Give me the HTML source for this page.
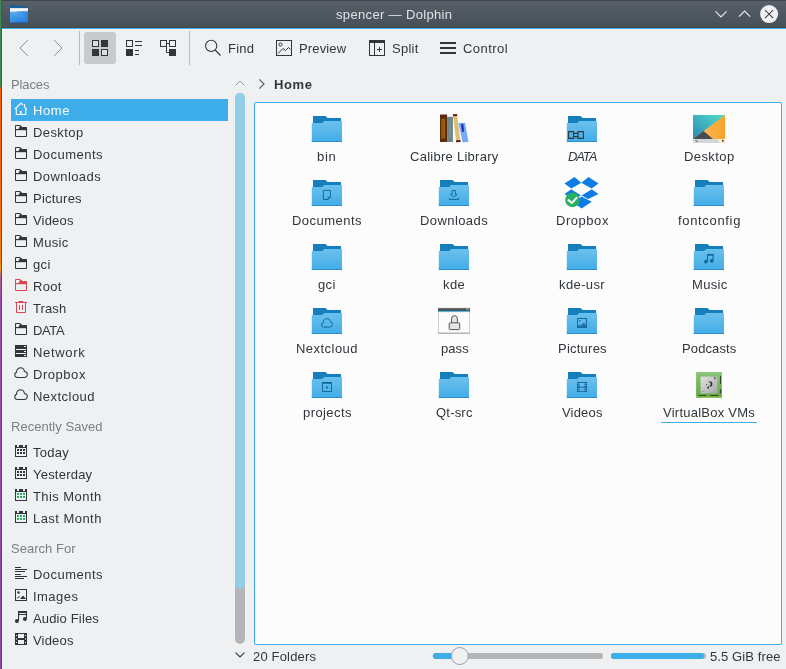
<!DOCTYPE html>
<html><head><meta charset="utf-8"><style>
html,body{margin:0;padding:0;}
body{width:786px;height:669px;overflow:hidden;position:relative;background:#eff0f1;font-family:"Liberation Sans", sans-serif;color:#31363b;}
.t{position:absolute;white-space:nowrap;will-change:transform;font-size:13px;line-height:18px;color:#31363b;}
.hd{color:#85888b;}
.ic{position:absolute;overflow:visible;}
</style></head><body>
<svg width="0" height="0" style="position:absolute"><defs>
<linearGradient id="fg" x1="0" y1="0" x2="0" y2="1"><stop offset="0" stop-color="#6cc0ee"/><stop offset="1" stop-color="#40ade8"/></linearGradient>
<linearGradient id="tg" x1="0" y1="0" x2="1" y2="1"><stop offset="0" stop-color="#56aef0"/><stop offset="1" stop-color="#1673d8"/></linearGradient>
</defs></svg>
<div style="position:absolute;left:0;top:0;width:786px;height:28px;background:linear-gradient(#40464c 0,#40464c 1px,#57606a 1px,#475057 27px,#434a50 27px)"></div><div style="position:absolute;left:0;top:28px;width:786px;height:1px;background:#3daee9"></div><div style="position:absolute;left:2px;top:29px;width:784px;height:1px;background:#f6f3f0"></div><svg class="ic" style="left:10px;top:5px" width="18" height="18" viewBox="0 0 18 18">
<path d="M0 0.1H7.9L8.9 1.3H18V17.7H0Z" fill="#1c5e9a"/>
<rect x="0" y="3.1" width="18" height="3.1" fill="#f2f4f6"/>
<path d="M0 6.2H18V7H0Z" fill="#e4eaf0"/>
<path d="M0 7.1H6.6L7.3 6.2H18V17.7H0Z" fill="url(#tg)"/>
<path d="M0 7.1H6.6L7.3 6.2H10L18 14V17.7H14Z" fill="#ffffff" opacity="0.06"/>
<rect x="0" y="17.2" width="18" height="0.5" fill="#155aa0"/>
</svg><div class="t" style="left:336.19px;top:6px;letter-spacing:0.345px;color:#dfe1e3;">spencer — Dolphin</div><svg class="ic" style="left:712px;top:4px" width="70" height="22" viewBox="712 4 70 22">
<path d="M715.5 11.3L721 16.8L726.5 11.3" stroke="#e8e9ea" stroke-width="1.2" fill="none"/>
<path d="M739 16.6L744.6 11L750.2 16.6" stroke="#e8e9ea" stroke-width="1.2" fill="none"/>
<circle cx="769.1" cy="14.1" r="9" fill="#eff0f1"/>
<path d="M765 10L773.2 18.2M773.2 10L765 18.2" stroke="#31363b" stroke-width="1.05"/>
</svg><div style="position:absolute;left:0;top:0;width:1px;height:669px;background:linear-gradient(#3f8c50 0,#3f8c50 87px,#ff5a00 88px,#ff6a00 200px,#ff7e00 262px,#ffa000 268px,#b8608a 276px,#9a4cb2 300px,#8e44ad 669px)"></div><div style="position:absolute;left:1px;top:0;width:1px;height:669px;background:#4c5257"></div><div style="position:absolute;left:2px;top:30px;width:1px;height:639px;background:#f5f6f7"></div><svg class="ic" style="left:0;top:30px" width="520" height="40" viewBox="0 30 520 40">
<path d="M27.8 40.2L20 48L27.8 55.8" stroke="#8c8e90" stroke-width="1" fill="none"/>
<path d="M54.2 40.2L62 48L54.2 55.8" stroke="#8c8e90" stroke-width="1" fill="none"/>
<rect x="79" y="31" width="1" height="34" fill="#b9babb"/>
<rect x="84" y="32" width="32" height="32" rx="3" fill="#c9cacc"/>
<rect x="92.5" y="40.5" width="6" height="6" fill="#dcdddf" stroke="#31363b"/>
<rect x="101" y="40" width="7" height="7" fill="#31363b"/>
<rect x="92" y="49" width="7" height="7" fill="#31363b"/>
<rect x="101.5" y="49.5" width="6" height="6" fill="#dcdddf" stroke="#31363b"/>
<rect x="126.5" y="40.5" width="6" height="6" fill="none" stroke="#31363b"/>
<rect x="126" y="49" width="7" height="7" fill="#31363b"/>
<rect x="135" y="41" width="7" height="1" fill="#31363b"/>
<rect x="135" y="45" width="7" height="1" fill="#31363b"/>
<rect x="135" y="50" width="4" height="1" fill="#31363b"/>
<rect x="135" y="54" width="4" height="1" fill="#31363b"/>
<rect x="160.5" y="40.5" width="6" height="6" fill="none" stroke="#31363b"/>
<rect x="169.5" y="40.5" width="6" height="6" fill="none" stroke="#31363b"/>
<rect x="169" y="49" width="7" height="7" fill="#31363b"/>
<path d="M167 43.5H169M166.5 47V52.5H169" stroke="#31363b" fill="none"/>
<rect x="189" y="31" width="1" height="34" fill="#b9babb"/>
<circle cx="211.2" cy="45.9" r="5.6" stroke="#31363b" stroke-width="1.1" fill="none"/>
<path d="M215.2 50L220.5 55.5" stroke="#31363b" stroke-width="1.1"/>
<rect x="276.5" y="40.5" width="15" height="15" fill="none" stroke="#31363b"/>
<circle cx="280.5" cy="44.5" r="1.6" stroke="#31363b" fill="none"/>
<path d="M278 53.5L283 48.5L285.5 50.5L288.5 47.5L290.5 49.5" stroke="#31363b" fill="none"/>
<rect x="369.5" y="40.5" width="15" height="15" fill="none" stroke="#31363b"/>
<rect x="369" y="40" width="16" height="3" fill="#31363b"/>
<rect x="374" y="43" width="1" height="13" fill="#31363b"/>
<path d="M379.5 47V52M377 49.5H382" stroke="#31363b"/>
<rect x="440" y="42" width="16" height="2" fill="#31363b"/>
<rect x="440" y="47" width="16" height="2" fill="#31363b"/>
<rect x="440" y="52" width="16" height="2" fill="#31363b"/>
</svg><div class="t" style="left:228.00px;top:40px;letter-spacing:0.211px;">Find</div><div class="t" style="left:298.50px;top:40px;letter-spacing:0.150px;">Preview</div><div class="t" style="left:391.50px;top:40px;letter-spacing:0.250px;">Split</div><div class="t" style="left:462.60px;top:40px;letter-spacing:0.460px;">Control</div><div class="t" style="left:10.50px;top:76px;letter-spacing:-0.120px;color:#7c7f82;">Places</div><div class="t" style="left:10.60px;top:418px;letter-spacing:0.028px;color:#7c7f82;">Recently Saved</div><div class="t" style="left:10.60px;top:540px;letter-spacing:0.020px;color:#7c7f82;">Search For</div><div style="position:absolute;left:11px;top:99px;width:217px;height:22px;background:#3daee9"></div><div class="t" style="left:33.20px;top:102px;letter-spacing:0.578px;color:#fcfcfc;">Home</div><svg class="ic" style="left:13px;top:101px" width="16" height="16" viewBox="0 0 16 16">
<path d="M2 8L8 2L10 4" stroke="#fcfcfc" fill="none" stroke-width="1.1"/>
<path d="M11.5 3V6" stroke="#fcfcfc" stroke-width="1.1"/>
<path d="M11.5 6L14 8.5" stroke="#fcfcfc" stroke-width="1.1"/>
<path d="M3.3 7.5V13.5H12.8V7.5" stroke="#fcfcfc" fill="none" stroke-width="1.1"/>
<rect x="7" y="10" width="1.6" height="3.6" fill="#fcfcfc"/>
</svg><div class="t" style="left:33.20px;top:124px;letter-spacing:0.406px;color:#31363b;">Desktop</div><svg class="ic" style="left:14px;top:124px" width="14" height="14" viewBox="-1 -1 14 14">
<path d="M0.5 0.5H5.2L7.2 2.5H11.5V11.5H0.5Z" fill="none" stroke="#31363b"/>
<path d="M5.2 0.5L7.2 2.5H12V4.5H3.4Z" fill="#31363b"/>
<rect x="0" y="4" width="12" height="1.2" fill="#31363b"/>
</svg><div class="t" style="left:33.20px;top:146px;letter-spacing:0.481px;color:#31363b;">Documents</div><svg class="ic" style="left:14px;top:146px" width="14" height="14" viewBox="-1 -1 14 14">
<path d="M0.5 0.5H5.2L7.2 2.5H11.5V11.5H0.5Z" fill="none" stroke="#31363b"/>
<path d="M5.2 0.5L7.2 2.5H12V4.5H3.4Z" fill="#31363b"/>
<rect x="0" y="4" width="12" height="1.2" fill="#31363b"/>
</svg><div class="t" style="left:33.20px;top:168px;letter-spacing:0.418px;color:#31363b;">Downloads</div><svg class="ic" style="left:14px;top:168px" width="14" height="14" viewBox="-1 -1 14 14">
<path d="M0.5 0.5H5.2L7.2 2.5H11.5V11.5H0.5Z" fill="none" stroke="#31363b"/>
<path d="M5.2 0.5L7.2 2.5H12V4.5H3.4Z" fill="#31363b"/>
<rect x="0" y="4" width="12" height="1.2" fill="#31363b"/>
</svg><div class="t" style="left:33.20px;top:190px;letter-spacing:0.236px;color:#31363b;">Pictures</div><svg class="ic" style="left:14px;top:190px" width="14" height="14" viewBox="-1 -1 14 14">
<path d="M0.5 0.5H5.2L7.2 2.5H11.5V11.5H0.5Z" fill="none" stroke="#31363b"/>
<path d="M5.2 0.5L7.2 2.5H12V4.5H3.4Z" fill="#31363b"/>
<rect x="0" y="4" width="12" height="1.2" fill="#31363b"/>
</svg><div class="t" style="left:33.20px;top:212px;letter-spacing:0.177px;color:#31363b;">Videos</div><svg class="ic" style="left:14px;top:212px" width="14" height="14" viewBox="-1 -1 14 14">
<path d="M0.5 0.5H5.2L7.2 2.5H11.5V11.5H0.5Z" fill="none" stroke="#31363b"/>
<path d="M5.2 0.5L7.2 2.5H12V4.5H3.4Z" fill="#31363b"/>
<rect x="0" y="4" width="12" height="1.2" fill="#31363b"/>
</svg><div class="t" style="left:33.20px;top:234px;letter-spacing:0.341px;color:#31363b;">Music</div><svg class="ic" style="left:14px;top:234px" width="14" height="14" viewBox="-1 -1 14 14">
<path d="M0.5 0.5H5.2L7.2 2.5H11.5V11.5H0.5Z" fill="none" stroke="#31363b"/>
<path d="M5.2 0.5L7.2 2.5H12V4.5H3.4Z" fill="#31363b"/>
<rect x="0" y="4" width="12" height="1.2" fill="#31363b"/>
</svg><div class="t" style="left:33.20px;top:256px;letter-spacing:0.323px;color:#31363b;">gci</div><svg class="ic" style="left:14px;top:256px" width="14" height="14" viewBox="-1 -1 14 14">
<path d="M0.5 0.5H5.2L7.2 2.5H11.5V11.5H0.5Z" fill="none" stroke="#31363b"/>
<path d="M5.2 0.5L7.2 2.5H12V4.5H3.4Z" fill="#31363b"/>
<rect x="0" y="4" width="12" height="1.2" fill="#31363b"/>
</svg><div class="t" style="left:33.20px;top:278px;letter-spacing:0.262px;color:#31363b;">Root</div><svg class="ic" style="left:14px;top:278px" width="14" height="14" viewBox="-1 -1 14 14">
<path d="M0.5 0.5H5.2L7.2 2.5H11.5V11.5H0.5Z" fill="none" stroke="#da4453"/>
<path d="M5.2 0.5L7.2 2.5H12V4.5H3.4Z" fill="#da4453"/>
<rect x="0" y="4" width="12" height="1.2" fill="#da4453"/>
</svg><div class="t" style="left:33.20px;top:300px;letter-spacing:0.100px;color:#31363b;">Trash</div><svg class="ic" style="left:14px;top:300px" width="14" height="14" viewBox="-1 -1 14 14">
<path d="M0 1.5H12M4 1.5V0.5H8V1.5" stroke="#da4453" fill="none"/>
<path d="M1.5 1.5V11.5H10.5V1.5" stroke="#da4453" fill="none"/>
<path d="M4.5 4V9M7.5 4V9" stroke="#da4453"/>
</svg><div class="t" style="left:33.20px;top:322px;letter-spacing:-0.371px;color:#31363b;">DATA</div><svg class="ic" style="left:14px;top:322px" width="14" height="14" viewBox="-1 -1 14 14">
<path d="M0.5 0.5H5.2L7.2 2.5H11.5V11.5H0.5Z" fill="none" stroke="#31363b"/>
<path d="M5.2 0.5L7.2 2.5H12V4.5H3.4Z" fill="#31363b"/>
<rect x="0" y="4" width="12" height="1.2" fill="#31363b"/>
</svg><div class="t" style="left:33.20px;top:344px;letter-spacing:0.661px;color:#31363b;">Network</div><svg class="ic" style="left:15px;top:345px" width="12" height="12" viewBox="0 0 12 12">
<rect x="0" y="0" width="12" height="12" fill="#31363b"/>
<rect x="1" y="4" width="10" height="1" fill="#eff0f1"/>
<rect x="1" y="8" width="10" height="1" fill="#eff0f1"/>
<rect x="9" y="1" width="2" height="1" fill="#eff0f1"/>
<rect x="9" y="6" width="2" height="1" fill="#eff0f1"/>
<rect x="9" y="10" width="2" height="1" fill="#eff0f1"/>
</svg><div class="t" style="left:33.20px;top:366px;letter-spacing:0.542px;color:#31363b;">Dropbox</div><svg class="ic" style="left:10px;top:362px" width="22" height="20" viewBox="10 -12 22 20">
<path d="M17.5 3.5A2.7 2.7 0 0 1 16.64 -1.76A3.9 3.9 0 1 1 24.39 -2.50A3.0 3.0 0 0 1 24.3 3.5Z" fill="none" stroke="#31363b" stroke-width="1.05"/>
</svg><div class="t" style="left:33.20px;top:388px;letter-spacing:0.467px;color:#31363b;">Nextcloud</div><svg class="ic" style="left:10px;top:384px" width="22" height="20" viewBox="10 -12 22 20">
<path d="M17.5 3.5A2.7 2.7 0 0 1 16.64 -1.76A3.9 3.9 0 1 1 24.39 -2.50A3.0 3.0 0 0 1 24.3 3.5Z" fill="none" stroke="#31363b" stroke-width="1.05"/>
</svg><div class="t" style="left:33.20px;top:444px;letter-spacing:0.281px;color:#31363b;">Today</div><svg class="ic" style="left:15px;top:445px" width="12" height="12" viewBox="0 0 12 12">
<rect x="0.5" y="2.5" width="11" height="9" fill="none" stroke="#31363b"/>
<path d="M0 0H2V2H4V0H8V2H10V0H12V3H0Z" fill="#31363b"/>
<rect x="2" y="4" width="2" height="2" fill="#31363b"/><rect x="2" y="7" width="2" height="2" fill="#31363b"/><rect x="5" y="4" width="2" height="2" fill="#31363b"/><rect x="5" y="7" width="2" height="2" fill="#31363b"/><rect x="8" y="4" width="2" height="2" fill="#31363b"/><rect x="8" y="7" width="2" height="2" fill="#31363b"/>
</svg><div class="t" style="left:33.20px;top:466px;letter-spacing:0.220px;color:#31363b;">Yesterday</div><svg class="ic" style="left:15px;top:467px" width="12" height="12" viewBox="0 0 12 12">
<rect x="0.5" y="2.5" width="11" height="9" fill="none" stroke="#31363b"/>
<path d="M0 0H2V2H4V0H8V2H10V0H12V3H0Z" fill="#31363b"/>
<rect x="2" y="4" width="2" height="2" fill="#31363b"/><rect x="2" y="7" width="2" height="2" fill="#31363b"/><rect x="5" y="4" width="2" height="2" fill="#31363b"/><rect x="5" y="7" width="2" height="2" fill="#31363b"/><rect x="8" y="4" width="2" height="2" fill="#31363b"/><rect x="8" y="7" width="2" height="2" fill="#31363b"/>
</svg><div class="t" style="left:33.20px;top:488px;letter-spacing:0.433px;color:#31363b;">This Month</div><svg class="ic" style="left:15px;top:489px" width="12" height="12" viewBox="0 0 12 12">
<rect x="0.5" y="2.5" width="11" height="9" fill="none" stroke="#31363b"/>
<path d="M0 0H2V2H4V0H8V2H10V0H12V3H0Z" fill="#31363b"/>
<rect x="2" y="4" width="2" height="2" fill="#27ae60"/><rect x="2" y="7" width="2" height="2" fill="#27ae60"/><rect x="5" y="4" width="2" height="2" fill="#27ae60"/><rect x="5" y="7" width="2" height="2" fill="#27ae60"/><rect x="8" y="4" width="2" height="2" fill="#27ae60"/><rect x="8" y="7" width="2" height="2" fill="#27ae60"/>
</svg><div class="t" style="left:33.20px;top:510px;letter-spacing:0.450px;color:#31363b;">Last Month</div><svg class="ic" style="left:15px;top:511px" width="12" height="12" viewBox="0 0 12 12">
<rect x="0.5" y="2.5" width="11" height="9" fill="none" stroke="#31363b"/>
<path d="M0 0H2V2H4V0H8V2H10V0H12V3H0Z" fill="#31363b"/>
<rect x="2" y="4" width="2" height="2" fill="#27ae60"/><rect x="2" y="7" width="2" height="2" fill="#27ae60"/><rect x="5" y="4" width="2" height="2" fill="#27ae60"/><rect x="5" y="7" width="2" height="2" fill="#27ae60"/><rect x="8" y="4" width="2" height="2" fill="#27ae60"/><rect x="8" y="7" width="2" height="2" fill="#27ae60"/>
</svg><div class="t" style="left:33.20px;top:566px;letter-spacing:0.481px;color:#31363b;">Documents</div><svg class="ic" style="left:15px;top:567px" width="12" height="12" viewBox="0 0 12 12"><rect x="0" y="0" width="6" height="1" fill="#31363b"/><rect x="0" y="2" width="12" height="1" fill="#31363b"/><rect x="0" y="4" width="10" height="1" fill="#31363b"/><rect x="0" y="7" width="6" height="1" fill="#31363b"/><rect x="0" y="9" width="12" height="1" fill="#31363b"/><rect x="0" y="11" width="9" height="1" fill="#31363b"/></svg><div class="t" style="left:33.20px;top:588px;letter-spacing:0.464px;color:#31363b;">Images</div><svg class="ic" style="left:15px;top:589px" width="12" height="12" viewBox="0 0 12 12">
<rect x="0.5" y="0.5" width="11" height="11" fill="none" stroke="#31363b"/>
<circle cx="3.5" cy="3.5" r="1.2" fill="#31363b"/>
<path d="M1 10L4 7L5 8Z M5 10L8 6.5L11 10Z" fill="#31363b"/>
</svg><div class="t" style="left:33.20px;top:610px;letter-spacing:0.149px;color:#31363b;">Audio Files</div><svg class="ic" style="left:15px;top:611px" width="12" height="12" viewBox="0 0 12 12">
<rect x="3" y="0" width="9" height="2" fill="#31363b"/>
<rect x="3" y="3" width="9" height="1" fill="#31363b"/>
<rect x="3" y="0" width="1.1" height="9.5" fill="#31363b"/>
<rect x="10.9" y="0" width="1.1" height="7.8" fill="#31363b"/>
<circle cx="1.9" cy="9.9" r="2" fill="#31363b"/>
<circle cx="9.9" cy="7.9" r="2" fill="#31363b"/>
</svg><div class="t" style="left:33.20px;top:632px;letter-spacing:0.177px;color:#31363b;">Videos</div><svg class="ic" style="left:15px;top:633px" width="12" height="12" viewBox="0 0 12 12">
<rect x="0" y="0" width="12" height="12" fill="#31363b"/>
<rect x="3" y="1" width="6" height="4" fill="#eff0f1"/>
<rect x="3" y="7" width="6" height="4" fill="#eff0f1"/>
<rect x="1" y="2" width="1" height="1" fill="#eff0f1"/><rect x="1" y="5" width="1" height="2" fill="#eff0f1" opacity="0.6"/><rect x="1" y="9" width="1" height="1" fill="#eff0f1"/>
<rect x="10" y="2" width="1" height="1" fill="#eff0f1"/><rect x="10" y="5" width="1" height="2" fill="#eff0f1" opacity="0.6"/><rect x="10" y="9" width="1" height="1" fill="#eff0f1"/>
</svg><svg class="ic" style="left:230px;top:76px" width="20" height="590" viewBox="230 76 20 590">
<path d="M235.5 85.5L240 81L244.5 85.5" stroke="#9c9ea0" fill="none"/>
<rect x="235" y="93" width="10" height="551" rx="5" fill="#b4b5b6"/>
<rect x="235" y="93" width="10" height="496" rx="5" fill="#93cee9"/>
<path d="M235.6 652.6L240 657L244.4 652.6" stroke="#31363b" stroke-width="1.1" fill="none"/>
</svg><svg class="ic" style="left:255px;top:76px" width="14" height="16" viewBox="255 76 14 16">
<path d="M259.3 79.3L264 84L259.3 88.7" stroke="#5d6165" stroke-width="1.2" fill="none"/>
</svg><div class="t" style="left:273.80px;top:76px;letter-spacing:0.598px;font-weight:bold;">Home</div><div style="position:absolute;left:254px;top:102px;width:526px;height:541px;border:1px solid #3daee9;border-radius:2px;background:#fcfcfc"></div><svg class="ic" style="left:311px;top:112px" width="32" height="32" viewBox="0 0 32 32">
<path d="M2 3.9H14.6L16.6 6H30V13H2Z" fill="#167fbb"/>
<path d="M0.8 11H11.2L13.2 9H31V30H0.8Z" fill="url(#fg)"/>
<rect x="0.8" y="29" width="30.2" height="1" fill="#2a8ccb"/>
</svg><div class="t" style="left:317.30px;top:148px;letter-spacing:0.677px;">bin</div><svg class="ic" style="left:438px;top:112px" width="32" height="32" viewBox="0 0 32 32">
<rect x="2" y="2.5" width="7.1" height="27.5" fill="#5a2b0c"/>
<rect x="3.3" y="6.7" width="3.9" height="19.8" fill="#c8841a" opacity="0.55"/>
<rect x="9.1" y="4.8" width="5.8" height="25.2" fill="#6d8288"/>
<rect x="11" y="8" width="2" height="18" fill="#8a9ca0" opacity="0.5"/>
<path d="M14.9 2.3L19 2.1L22.6 30L18.2 30.2Z" fill="#dcc074"/>
<path d="M14.9 2.3L19 2.1L19.25 4L15.1 4.2Z" fill="#6b1b1b"/>
<path d="M17.95 28.3L22.35 28.1L22.6 30L18.2 30.2Z" fill="#6b1b1b"/>
<path d="M20.5 11L27 10.8L30.5 30L24.5 30.2Z" fill="#75aaf8"/>
<path d="M23.2 12.1L25.3 12L26 19.7L23.9 19.8Z" fill="#1d2db0"/>
</svg><div class="t" style="left:410.20px;top:148px;letter-spacing:0.271px;">Calibre Library</div><svg class="ic" style="left:566px;top:112px" width="32" height="32" viewBox="0 0 32 32">
<path d="M2 3.9H14.6L16.6 6H30V13H2Z" fill="#167fbb"/>
<path d="M0.8 11H11.2L13.2 9H31V30H0.8Z" fill="url(#fg)"/>
<rect x="0.8" y="29" width="30.2" height="1" fill="#2a8ccb"/>
<path d="M2.6 19.6H7.6V21.4H12V19.6H17.4V26.4H12V24.6H7.6V26.4H2.6Z" fill="none" stroke="#31363b" stroke-width="1.1" stroke-linejoin="round"/><path d="M7.6 21.4V24.6M12 21.4V24.6" stroke="#31363b" stroke-width="1.1"/></svg><div class="t" style="left:567.88px;top:148px;letter-spacing:-1.125px;font-style:italic;">DATA</div><svg class="ic" style="left:693px;top:112px" width="32" height="32" viewBox="0 0 32 32">
<defs><linearGradient id="dk1" x1="0" y1="1" x2="1" y2="0"><stop offset="0" stop-color="#2f86b8"/><stop offset="1" stop-color="#4ee0c8"/></linearGradient>
<linearGradient id="dk2" x1="0" y1="0" x2="1" y2="0"><stop offset="0" stop-color="#ffc06a"/><stop offset="1" stop-color="#f9a32c"/></linearGradient></defs>
<rect x="0" y="3" width="32" height="24" fill="url(#dk1)"/>
<path d="M32 3V27H0Z" fill="url(#dk2)"/>
<path d="M0 27L10.5 19L20 27Z" fill="#474e52"/>
<rect x="0" y="27" width="32" height="4" fill="#d3d6d8"/>
<path d="M24 27H32V31H27Z" fill="#fde8c8"/>
<path d="M2.5 28L4.5 30" stroke="#31363b" stroke-width="0.9"/>
<rect x="29" y="28" width="1.6" height="1.6" fill="#31363b"/>
</svg><div class="t" style="left:684.23px;top:148px;letter-spacing:0.406px;">Desktop</div><svg class="ic" style="left:311px;top:176px" width="32" height="32" viewBox="0 0 32 32">
<path d="M2 3.9H14.6L16.6 6H30V13H2Z" fill="#167fbb"/>
<path d="M0.8 11H11.2L13.2 9H31V30H0.8Z" fill="url(#fg)"/>
<rect x="0.8" y="29" width="30.2" height="1" fill="#2a8ccb"/>
<path d="M12.4 14.4H19.4V21.2L17.1 23.5H12.4Z" fill="none" stroke="#15699c"/><path d="M17.1 23.5V21.2H19.4" fill="none" stroke="#15699c"/></svg><div class="t" style="left:291.96px;top:212px;letter-spacing:0.481px;">Documents</div><svg class="ic" style="left:438px;top:176px" width="32" height="32" viewBox="0 0 32 32">
<path d="M2 3.9H14.6L16.6 6H30V13H2Z" fill="#167fbb"/>
<path d="M0.8 11H11.2L13.2 9H31V30H0.8Z" fill="url(#fg)"/>
<rect x="0.8" y="29" width="30.2" height="1" fill="#2a8ccb"/>
<path d="M14.2 14.5H17.4V18.3H19.1L15.8 21.4L12.5 18.3H14.2Z" fill="none" stroke="#15699c"/><path d="M11.5 22V23.5H20.5V22" fill="none" stroke="#15699c"/></svg><div class="t" style="left:420.45px;top:212px;letter-spacing:0.418px;">Downloads</div><svg class="ic" style="left:560px;top:172px" width="44" height="40" viewBox="560 172 44 40">
<path d="M564.5 183.5L574.4 177L581.3 182.7L571.4 188.6Z" fill="#0d7de3"/>
<path d="M581.3 182.7L588.5 177L598.5 183.5L591.6 188.6Z" fill="#0d7de3"/>
<path d="M571.4 189.2L564.5 194.1L573 199.5L581.3 195.3Z" fill="#0d7de3"/>
<path d="M591.6 189.2L598.5 194.1L587.8 199.3L581.3 195.3Z" fill="#0d7de3"/>
<path d="M581.7 196.4L592 201.4L581.7 208.6L573 202.2Z" fill="#0d7de3"/>
<path d="M571.4 188.9L581.3 195.3L591.6 188.9" stroke="#fcfcfc" stroke-width="0.7" fill="none"/>
<path d="M573 199.8L581.5 196L592 201.4" stroke="#fcfcfc" stroke-width="0.7" fill="none"/>
<circle cx="572.5" cy="199.9" r="7.3" fill="#27ae60"/>
<path d="M567.8 199.6L571.9 202.9L577.2 197.3" stroke="#fcfcfc" stroke-width="2" fill="none"/>
</svg><div class="t" style="left:555.53px;top:212px;letter-spacing:0.542px;">Dropbox</div><svg class="ic" style="left:693px;top:176px" width="32" height="32" viewBox="0 0 32 32">
<path d="M2 3.9H14.6L16.6 6H30V13H2Z" fill="#167fbb"/>
<path d="M0.8 11H11.2L13.2 9H31V30H0.8Z" fill="url(#fg)"/>
<rect x="0.8" y="29" width="30.2" height="1" fill="#2a8ccb"/>
</svg><div class="t" style="left:677.98px;top:212px;letter-spacing:0.666px;">fontconfig</div><svg class="ic" style="left:311px;top:240px" width="32" height="32" viewBox="0 0 32 32">
<path d="M2 3.9H14.6L16.6 6H30V13H2Z" fill="#167fbb"/>
<path d="M0.8 11H11.2L13.2 9H31V30H0.8Z" fill="url(#fg)"/>
<rect x="0.8" y="29" width="30.2" height="1" fill="#2a8ccb"/>
</svg><div class="t" style="left:318.20px;top:276px;letter-spacing:0.323px;">gci</div><svg class="ic" style="left:438px;top:240px" width="32" height="32" viewBox="0 0 32 32">
<path d="M2 3.9H14.6L16.6 6H30V13H2Z" fill="#167fbb"/>
<path d="M0.8 11H11.2L13.2 9H31V30H0.8Z" fill="url(#fg)"/>
<rect x="0.8" y="29" width="30.2" height="1" fill="#2a8ccb"/>
</svg><div class="t" style="left:443.36px;top:276px;letter-spacing:0.438px;">kde</div><svg class="ic" style="left:566px;top:240px" width="32" height="32" viewBox="0 0 32 32">
<path d="M2 3.9H14.6L16.6 6H30V13H2Z" fill="#167fbb"/>
<path d="M0.8 11H11.2L13.2 9H31V30H0.8Z" fill="url(#fg)"/>
<rect x="0.8" y="29" width="30.2" height="1" fill="#2a8ccb"/>
</svg><div class="t" style="left:558.95px;top:276px;letter-spacing:0.391px;">kde-usr</div><svg class="ic" style="left:693px;top:240px" width="32" height="32" viewBox="0 0 32 32">
<path d="M2 3.9H14.6L16.6 6H30V13H2Z" fill="#167fbb"/>
<path d="M0.8 11H11.2L13.2 9H31V30H0.8Z" fill="url(#fg)"/>
<rect x="0.8" y="29" width="30.2" height="1" fill="#2a8ccb"/>
<rect x="14.1" y="13.9" width="6.5" height="1.8" fill="#15699c"/><rect x="14" y="14" width="1.1" height="7.5" fill="#15699c"/><rect x="19.5" y="14" width="1.1" height="6.8" fill="#15699c"/><circle cx="12.9" cy="21.6" r="1.9" fill="#15699c"/><circle cx="18.7" cy="20.8" r="1.9" fill="#15699c"/></svg><div class="t" style="left:691.67px;top:276px;letter-spacing:0.341px;">Music</div><svg class="ic" style="left:311px;top:304px" width="32" height="32" viewBox="0 0 32 32">
<path d="M2 3.9H14.6L16.6 6H30V13H2Z" fill="#167fbb"/>
<path d="M0.8 11H11.2L13.2 9H31V30H0.8Z" fill="url(#fg)"/>
<rect x="0.8" y="29" width="30.2" height="1" fill="#2a8ccb"/>
<path d="M12.6 23.1A2.2 2.2 0 0 1 12.44 18.71A3.5 3.5 0 1 1 19.38 17.81A2.7 2.7 0 0 1 18.6 23.1Z" fill="none" stroke="#15699c"/></svg><div class="t" style="left:295.99px;top:340px;letter-spacing:0.467px;">Nextcloud</div><svg class="ic" style="left:438px;top:304px" width="32" height="32" viewBox="0 0 32 32">
<rect x="0.4" y="4.2" width="31.2" height="25.4" fill="#fcfcfc" stroke="#c0c4c8" stroke-width="0.8"/>
<rect x="0" y="4.2" width="32" height="3" fill="#4d555c"/>
<rect x="0" y="7.2" width="32" height="0.9" fill="#3daee9"/>
<rect x="28.5" y="4.6" width="2" height="1" fill="#e0e0e0"/>
<rect x="0" y="28.6" width="32" height="1" fill="#9ea5ab"/>
<path d="M13.6 18.8V14.8A2.9 3.2 0 0 1 19.4 14.8V18.8" fill="#e6e6e6" stroke="#555" stroke-width="1"/>
<rect x="11.2" y="18.8" width="10.5" height="6.8" rx="1" fill="#e4e4e4" stroke="#555" stroke-width="1"/>
</svg><div class="t" style="left:440.62px;top:340px;letter-spacing:0.070px;">pass</div><svg class="ic" style="left:566px;top:304px" width="32" height="32" viewBox="0 0 32 32">
<path d="M2 3.9H14.6L16.6 6H30V13H2Z" fill="#167fbb"/>
<path d="M0.8 11H11.2L13.2 9H31V30H0.8Z" fill="url(#fg)"/>
<rect x="0.8" y="29" width="30.2" height="1" fill="#2a8ccb"/>
<rect x="11.5" y="14.5" width="9" height="9" fill="none" stroke="#15699c"/><rect x="13.2" y="16" width="1.3" height="1.3" fill="#15699c"/><path d="M13 21.8L14.6 20.4L15.6 21.2L18 18.6L20 21.8Z" fill="#15699c"/><rect x="12" y="21.6" width="8" height="1.2" fill="#15699c"/></svg><div class="t" style="left:557.57px;top:340px;letter-spacing:0.236px;">Pictures</div><svg class="ic" style="left:693px;top:304px" width="32" height="32" viewBox="0 0 32 32">
<path d="M2 3.9H14.6L16.6 6H30V13H2Z" fill="#167fbb"/>
<path d="M0.8 11H11.2L13.2 9H31V30H0.8Z" fill="url(#fg)"/>
<rect x="0.8" y="29" width="30.2" height="1" fill="#2a8ccb"/>
</svg><div class="t" style="left:682.30px;top:340px;letter-spacing:0.115px;">Podcasts</div><svg class="ic" style="left:311px;top:368px" width="32" height="32" viewBox="0 0 32 32">
<path d="M2 3.9H14.6L16.6 6H30V13H2Z" fill="#167fbb"/>
<path d="M0.8 11H11.2L13.2 9H31V30H0.8Z" fill="url(#fg)"/>
<rect x="0.8" y="29" width="30.2" height="1" fill="#2a8ccb"/>
<rect x="11.5" y="14.5" width="9" height="9" fill="none" stroke="#15699c"/><rect x="11" y="14" width="10" height="1.8" fill="#15699c"/><path d="M15.2 17.8V21L17.6 19.4Z" fill="#15699c"/></svg><div class="t" style="left:302.59px;top:404px;letter-spacing:0.412px;">projects</div><svg class="ic" style="left:438px;top:368px" width="32" height="32" viewBox="0 0 32 32">
<path d="M2 3.9H14.6L16.6 6H30V13H2Z" fill="#167fbb"/>
<path d="M0.8 11H11.2L13.2 9H31V30H0.8Z" fill="url(#fg)"/>
<rect x="0.8" y="29" width="30.2" height="1" fill="#2a8ccb"/>
</svg><div class="t" style="left:436.20px;top:404px;letter-spacing:0.203px;">Qt-src</div><svg class="ic" style="left:566px;top:368px" width="32" height="32" viewBox="0 0 32 32">
<path d="M2 3.9H14.6L16.6 6H30V13H2Z" fill="#167fbb"/>
<path d="M0.8 11H11.2L13.2 9H31V30H0.8Z" fill="url(#fg)"/>
<rect x="0.8" y="29" width="30.2" height="1" fill="#2a8ccb"/>
<rect x="11" y="14" width="10" height="10" fill="#15699c"/><rect x="13.4" y="15" width="5.2" height="3.6" fill="#67bdec"/><rect x="13.4" y="19.6" width="5.2" height="3.6" fill="#55b4e9"/><rect x="11.8" y="15" width="1" height="1" fill="#62b9ea"/><rect x="11.8" y="17" width="1" height="1" fill="#62b9ea"/><rect x="11.8" y="20" width="1" height="1" fill="#62b9ea"/><rect x="11.8" y="22" width="1" height="1" fill="#62b9ea"/><rect x="19.2" y="15" width="1" height="1" fill="#62b9ea"/><rect x="19.2" y="17" width="1" height="1" fill="#62b9ea"/><rect x="19.2" y="20" width="1" height="1" fill="#62b9ea"/><rect x="19.2" y="22" width="1" height="1" fill="#62b9ea"/></svg><div class="t" style="left:561.71px;top:404px;letter-spacing:0.177px;">Videos</div><svg class="ic" style="left:693px;top:368px" width="32" height="32" viewBox="0 0 32 32">
<defs><linearGradient id="vgr" x1="0" y1="0" x2="0" y2="1"><stop offset="0" stop-color="#8ac476"/><stop offset="0.9" stop-color="#64aa48"/><stop offset="1" stop-color="#8eb848"/></linearGradient>
<linearGradient id="vbg" x1="0" y1="0" x2="1" y2="1"><stop offset="0" stop-color="#e2e2e2"/><stop offset="1" stop-color="#a6a6a6"/></linearGradient></defs>
<rect x="3.1" y="4.1" width="25.8" height="25.8" fill="url(#vgr)"/>
<rect x="7.6" y="8.6" width="16.8" height="16.8" fill="url(#vbg)"/>
<rect x="27" y="7.9" width="1" height="7.9" fill="#2d4a22"/>
<rect x="27" y="21" width="1" height="4.4" fill="#2d4a22"/>
<rect x="5.5" y="27" width="7.9" height="1" fill="#2d4a22"/>
<rect x="17.4" y="27" width="7.9" height="1" fill="#2d4a22"/>
<path d="M16.6 13.9A2 2 0 1 1 16.6 17.9" stroke="#2a2a2a" stroke-width="1.5" fill="none"/>
<circle cx="15.1" cy="19.4" r="1" fill="#2a2a2a"/>
<circle cx="13.6" cy="16.6" r="0.6" fill="#444"/>
<circle cx="15.3" cy="13.8" r="0.45" fill="#555"/>
<rect x="21" y="9.3" width="1.7" height="1.7" fill="#555"/>
<rect x="8.5" y="23.2" width="3" height="0.6" fill="#888"/>
</svg><div class="t" style="left:663.48px;top:404px;letter-spacing:0.242px;">VirtualBox VMs</div><div style="position:absolute;left:661px;top:422px;width:96px;height:1px;background:#3daee9"></div><div class="t" style="left:253.20px;top:648px;letter-spacing:0.173px;">20 Folders</div><svg class="ic" style="left:425px;top:640px" width="290" height="29" viewBox="425 640 290 29">
<rect x="433" y="653" width="170" height="6" rx="3" fill="#b4b5b6"/>
<rect x="433" y="653" width="30" height="6" rx="3" fill="#3daee9"/>
<circle cx="459.8" cy="656" r="8.5" fill="#eff0f1" stroke="#a0a1a3" stroke-width="1"/>
<rect x="611" y="653" width="95" height="6" rx="3" fill="#b4b5b6"/>
<rect x="611" y="653" width="93" height="6" rx="3" fill="#3daee9"/>
</svg><div class="t" style="left:710.00px;top:648px;letter-spacing:0.105px;">5.5 GiB free</div>
</body></html>
